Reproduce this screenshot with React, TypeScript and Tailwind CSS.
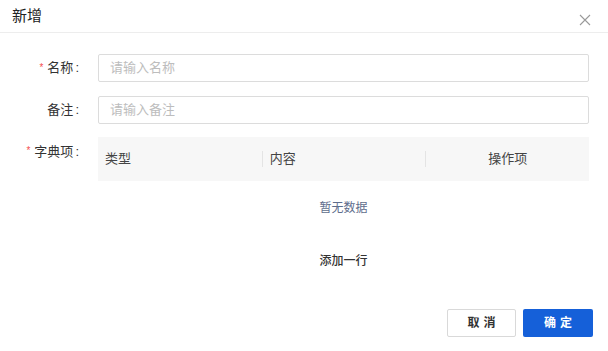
import React from "react";

const font = { fontFamily: '"Liberation Sans", "Noto Sans CJK SC", sans-serif' };

function Label({ text, required }: { text: string; required?: boolean }) {
  return (
    <div className="w-[98px] shrink-0 pr-[19px] flex justify-end items-center text-[13px] text-[#333] h-[28px]">
      {required && <span className="text-[#f5504f] text-[10px] mr-[4px] leading-none">*</span>}
      <span>{text}</span>
      <span className="ml-[2px]">:</span>
    </div>
  );
}

export default function App() {
  return (
    <div className="w-[608px] h-[351px] bg-white overflow-hidden" style={font}>
      {/* Header */}
      <div className="h-[33px] border-b border-[#ededed] flex items-center justify-between pl-[12px] pr-[17px]">
        <div className="text-[15px] text-[#222] mt-[1px]">新增</div>
        <svg width="12" height="12" viewBox="0 0 12 12" className="mt-[8px]">
          <path d="M1 1L11 11M11 1L1 11" stroke="#9a9a9a" strokeWidth="1.1" />
        </svg>
      </div>

      {/* Body */}
      <div className="pt-[21px] pr-[19px]">
        <div className="flex items-center">
          <Label text="名称" required />
          <div className="flex-1 h-[28px] border border-[#dcdcdc] rounded-[2px] flex items-center px-[11px] text-[13px] text-[#bdbdbd]">
            请输入名称
          </div>
        </div>

        <div className="flex items-center mt-[14px]">
          <Label text="备注" />
          <div className="flex-1 h-[28px] border border-[#dcdcdc] rounded-[2px] flex items-center px-[11px] text-[13px] text-[#bdbdbd]">
            请输入备注
          </div>
        </div>

        <div className="flex mt-[13px]">
          <div className="w-[98px] shrink-0 pr-[19px] flex justify-end items-start text-[13px] text-[#333] pt-[5px]">
            <span className="text-[#f5504f] text-[10px] mr-[4px] leading-[18px]">*</span>
            <span>字典项</span>
            <span className="ml-[2px]">:</span>
          </div>
          <div className="flex-1">
            <div className="h-[44px] bg-[#f7f7f7] grid grid-cols-3 items-center text-[13px] text-[#444]">
              <div className="pl-[7px]">类型</div>
              <div className="border-l border-[#e4e4e4] pl-[7px] h-[16px] flex items-center">内容</div>
              <div className="border-l border-[#e4e4e4] h-[16px] flex items-center justify-center">操作项</div>
            </div>
            <div className="h-[54px] flex items-center justify-center text-[12px] text-[#5e6d8c]">
              暂无数据
            </div>
            <div className="h-[51px] flex items-center justify-center text-[12px] text-[#333] font-medium">
              添加一行
            </div>
          </div>
        </div>

        <div className="flex justify-end gap-[7px] mt-[23px] mr-[-4px]">
          <button className="w-[69px] h-[28px] border border-[#d9d9d9] rounded-[2px] bg-white text-[12px] font-bold text-[#333] tracking-[4px] pl-[4px]">
            取消
          </button>
          <button className="w-[70px] h-[28px] rounded-[2px] bg-[#1560d9] text-[12px] font-bold text-white tracking-[4px] pl-[4px]">
            确定
          </button>
        </div>
      </div>
    </div>
  );
}
